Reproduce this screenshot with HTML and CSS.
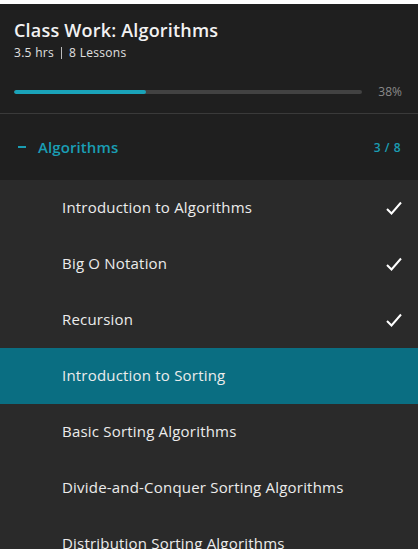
FILE: index.html
```html
<!DOCTYPE html>
<html>
<head>
<meta charset="utf-8">
<link rel="stylesheet" href="styles.css">
</head>
<body>
<div class="panel">
  <header class="head">
    <h1 class="title">Class Work: Algorithms</h1>
    <div class="meta"><span>3.5 hrs</span><span class="sep"></span><span>8 Lessons</span></div>
    <div class="progress">
      <div class="track"><div class="fill" style="width:38%"></div></div>
      <span class="pct">38%</span>
    </div>
  </header>
  <div class="section">
    <span class="minus"></span>
    <span class="sname">Algorithms</span>
    <span class="count">3 / 8</span>
  </div>
  <ul class="lessons">
    <li class="lesson"><span>Introduction to Algorithms</span><svg class="check" viewBox="0 0 16 14"><path d="M1 8l4.5 4.5L15 1.5" fill="none" stroke="#fff" stroke-width="2"/></svg></li>
    <li class="lesson"><span>Big O Notation</span><svg class="check" viewBox="0 0 16 14"><path d="M1 8l4.5 4.5L15 1.5" fill="none" stroke="#fff" stroke-width="2"/></svg></li>
    <li class="lesson"><span>Recursion</span><svg class="check" viewBox="0 0 16 14"><path d="M1 8l4.5 4.5L15 1.5" fill="none" stroke="#fff" stroke-width="2"/></svg></li>
    <li class="lesson active"><span>Introduction to Sorting</span></li>
    <li class="lesson"><span>Basic Sorting Algorithms</span></li>
    <li class="lesson"><span>Divide-and-Conquer Sorting Algorithms</span></li>
    <li class="lesson"><span>Distribution Sorting Algorithms</span></li>
  </ul>
</div>
</body>
</html>
```
FILE: styles.css
```css
* { box-sizing: border-box; }
html, body { margin: 0; padding: 0; background: #ffffff; }
body { font-family: "Open Sans", "Lato", sans-serif; overflow: hidden; }
.panel { margin-top: 4px; background: #1f1f1f; color: #ececec; }
.head { padding: 14px 16px 0 14px; border-bottom: 1px solid #3a3a3a; height: 110px; }
.title { margin: 0; font-size: 18px; font-weight: 600; color: #f2f2f2; line-height: 24px; letter-spacing: 0.2px; }
.meta { display: flex; align-items: center; font-size: 12px; color: #e0e0e0; margin-top: 3px; line-height: 16px; letter-spacing: 0.3px; }
.sep { width: 1px; height: 12px; background: #bbb; margin: 0 7px; }
.progress { display: flex; align-items: center; margin-top: 22px; }
.track { flex: 1; height: 4px; background: #424242; border-radius: 2px; overflow: hidden; margin-right: 14px; }
.fill { height: 100%; background: #1aa3b9; border-radius: 2px; }
.pct { font-size: 12px; color: #8a8a8a; width: 26px; text-align: right; }
.section { display: flex; align-items: center; height: 66px; padding: 0 17px 0 18px; color: #1a9db3; }
.minus { width: 8px; height: 2px; background: #1a9db3; margin-right: 12px; }
.sname { font-size: 15px; font-weight: 600; flex: 1; letter-spacing: 0.1px; }
.count { font-size: 12px; font-weight: 600; letter-spacing: 0.5px; }
.lessons { list-style: none; margin: 0; padding: 0; background: #2a2a2a; }
.lesson { display: flex; align-items: center; justify-content: space-between; height: 56px; padding: 0 16px 2px 62px; font-size: 15px; color: #ececec; letter-spacing: 0.2px; }
.lesson.active { background: #0a6e82; }
.check { width: 16px; height: 14px; margin-top: 2px; }
```
